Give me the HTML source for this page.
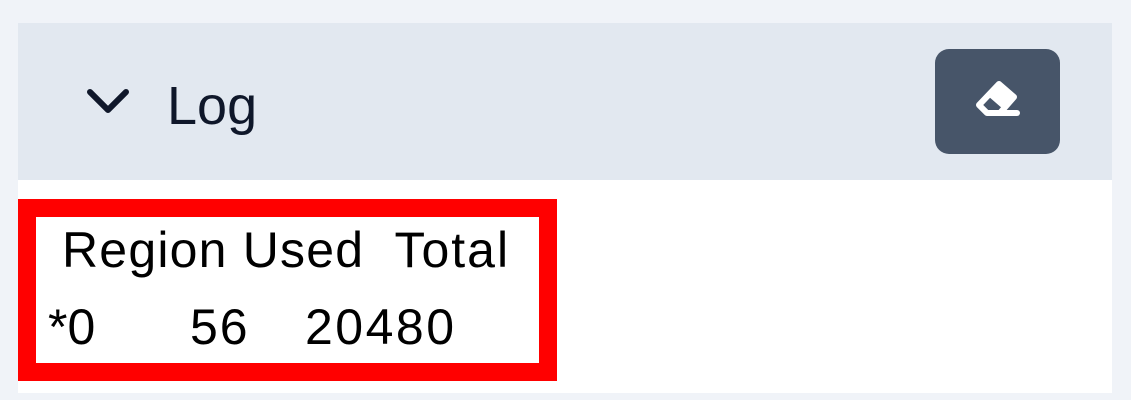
<!DOCTYPE html>
<html><head><style>
body{margin:0;width:1131px;height:400px;background:#f0f3f8;position:relative;overflow:hidden;font-family:"Liberation Sans",sans-serif;color:#0f172a}
.hdr{position:absolute;left:18px;top:23px;width:1094px;height:157px;background:#e2e8f0}
.body{position:absolute;left:18px;top:180px;width:1094px;height:213px;background:#fff}
.box{position:absolute;left:18px;top:199px;width:503px;height:146px;border:18px solid #ff0000;background:#fff}
.t{position:absolute;font-size:50px;line-height:1;white-space:pre;color:#000}
.btn{position:absolute;left:935px;top:49px;width:125px;height:105px;border-radius:14px;background:#475569}
</style></head><body>
<div class="hdr"></div>
<div class="body"></div>
<svg style="position:absolute;left:86px;top:86px" width="44" height="30"><path d="M4 6 L22 24 L40 6" stroke="#0f172a" stroke-width="6" fill="none" stroke-linecap="round" stroke-linejoin="round"/></svg>
<div class="t" style="left:167px;top:79px;font-size:54px;color:#0f172a">Log</div>
<div class="btn"><svg style="position:absolute;left:38px;top:30px" width="50" height="46" viewBox="0 0 50 46"><g fill="none" stroke="#fff" stroke-width="6" stroke-linejoin="round" stroke-linecap="round"><path d="M26 5 L41 18 L27 34 L14 34 L6 26 Z"/><path d="M27 34 L44 34"/></g><path d="M26 5 L41 18 L30 30 L15 17 Z" fill="#fff"/></svg></div>
<div class="box"></div>
<div class="t" style="left:62px;top:225px;letter-spacing:1.2px">Region Used  <span style="letter-spacing:2px">Total</span></div>
<div class="t" style="left:48px;top:302px">*0</div>
<div class="t" style="left:190px;top:302px;letter-spacing:2px">56</div>
<div class="t" style="left:305px;top:302px;letter-spacing:2.5px">20480</div>
</body></html>
